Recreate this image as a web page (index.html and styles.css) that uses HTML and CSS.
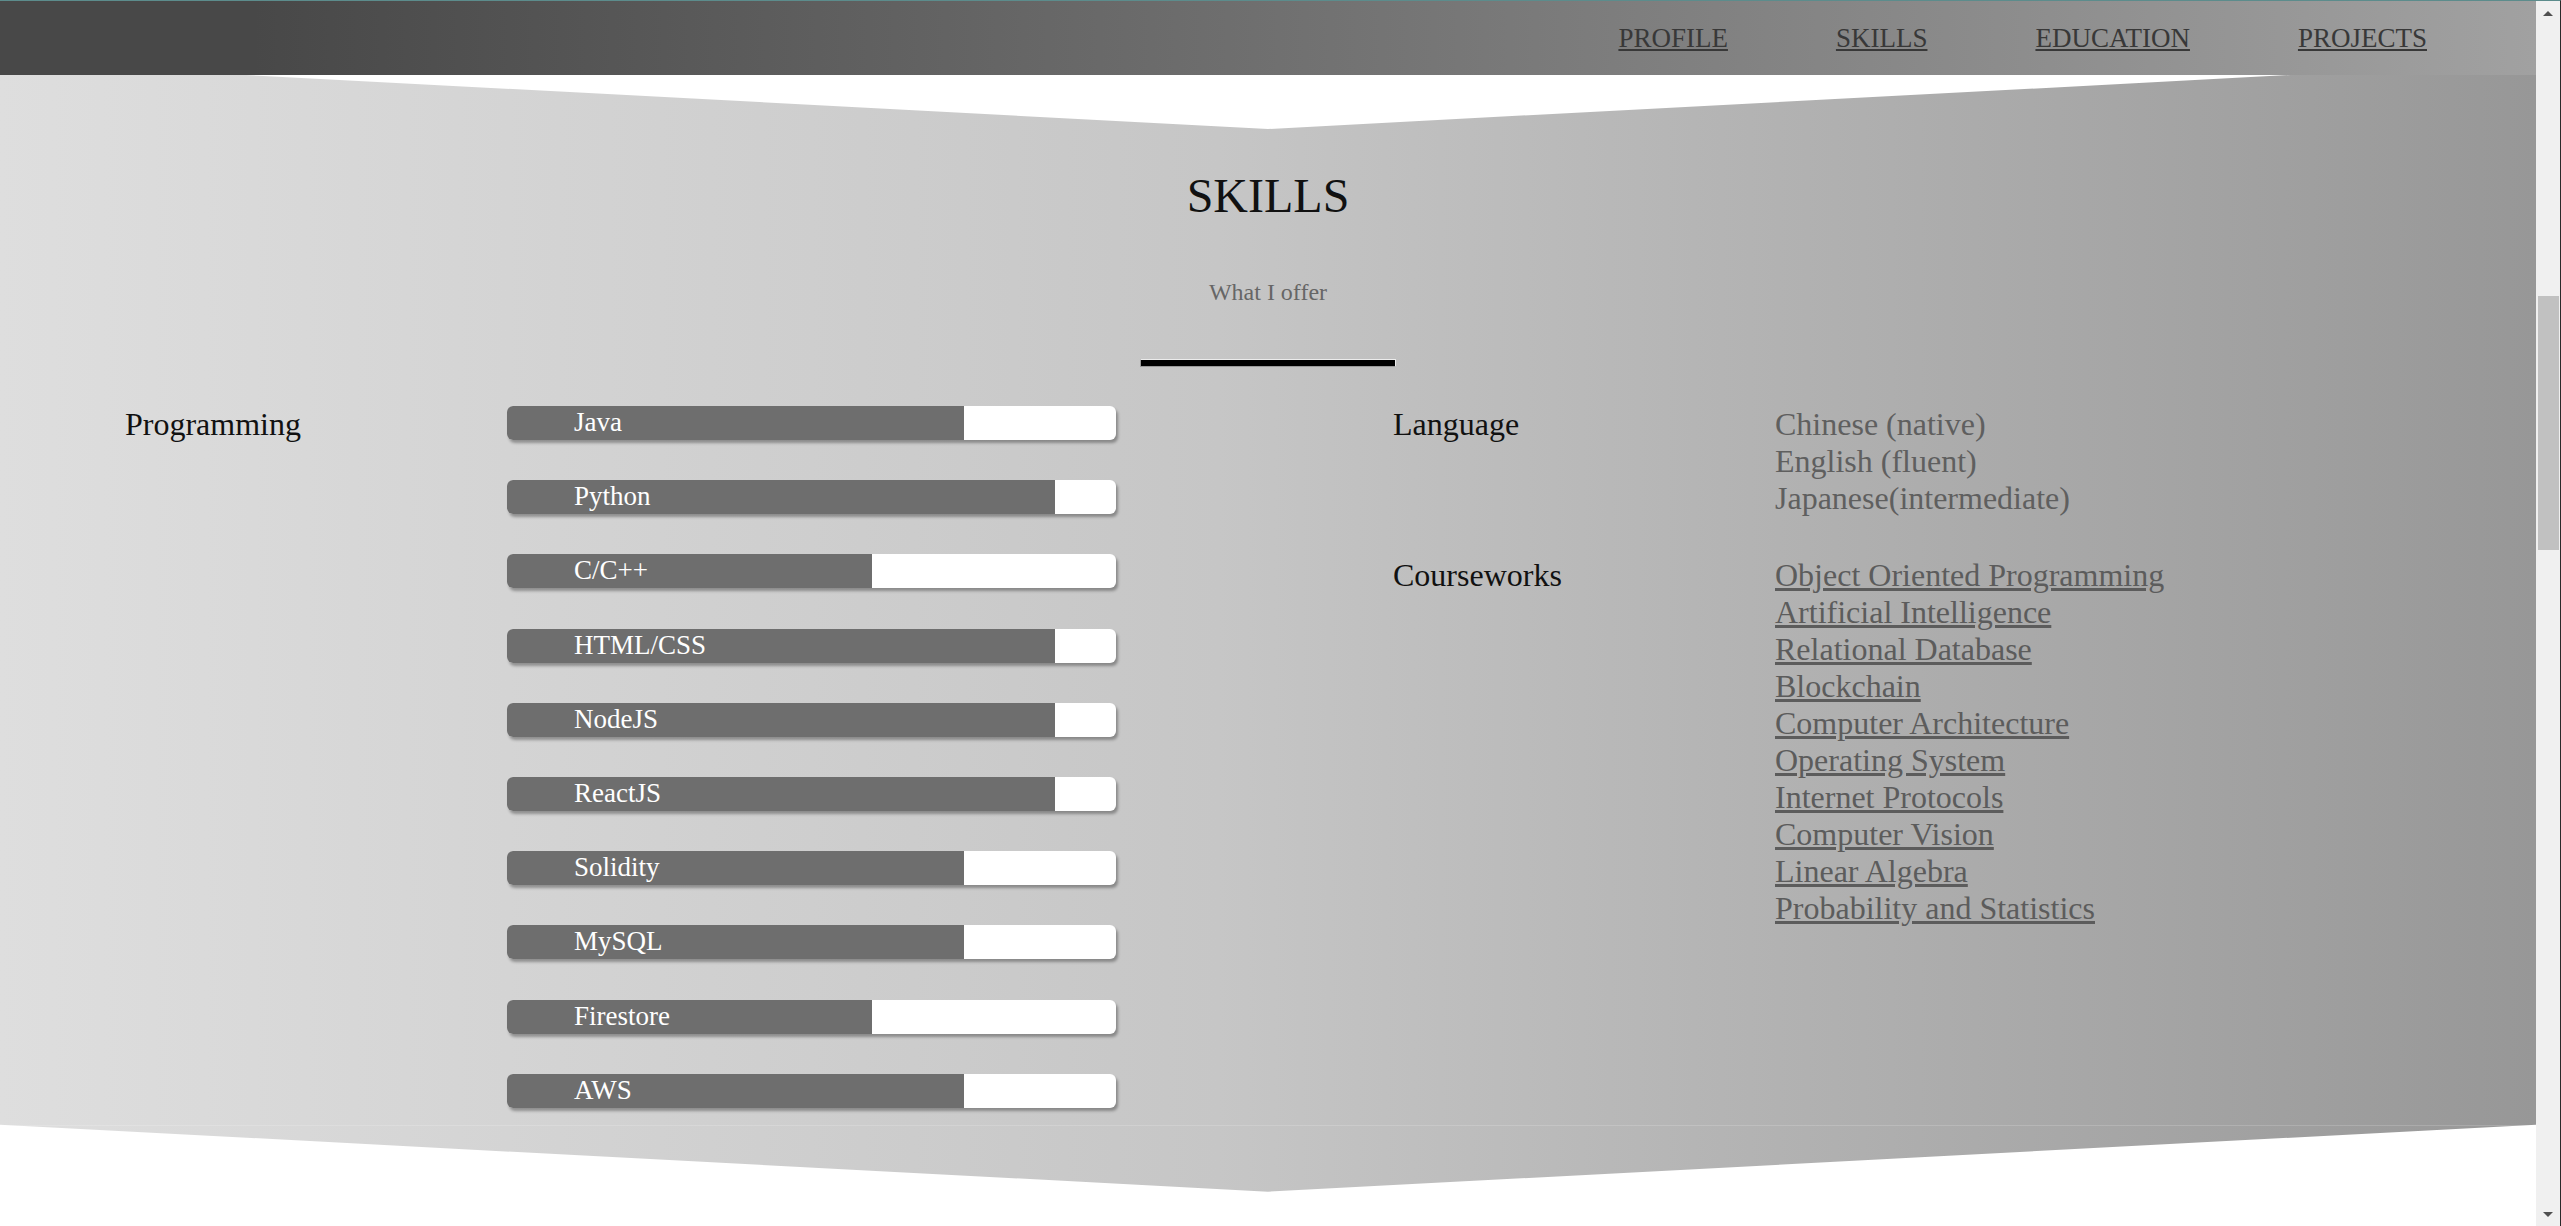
FILE: index.html
```html
<!DOCTYPE html>
<html lang="en">
<head>
<meta charset="utf-8">
<title>Skills</title>
<link rel="stylesheet" href="styles.css">
</head>
<body>
<div class="window">
  <div class="viewport">
    <nav class="topnav">
      <a href="#">PROFILE</a>
      <a href="#">SKILLS</a>
      <a href="#">EDUCATION</a>
      <a href="#">PROJECTS</a>
    </nav>
    <section class="skills">
      <h2 class="title">SKILLS</h2>
      <p class="subtitle">What I offer</p>
      <div class="divider"></div>
      <div class="columns">
        <div class="half">
          <div class="group">
            <div class="label">Programming</div>
            <div class="bars">
              <div class="bar"><div class="fill" style="width:75%"><span>Java</span></div></div>
              <div class="bar"><div class="fill" style="width:90%"><span>Python</span></div></div>
              <div class="bar"><div class="fill" style="width:60%"><span>C/C++</span></div></div>
              <div class="bar"><div class="fill" style="width:90%"><span>HTML/CSS</span></div></div>
              <div class="bar"><div class="fill" style="width:90%"><span>NodeJS</span></div></div>
              <div class="bar"><div class="fill" style="width:90%"><span>ReactJS</span></div></div>
              <div class="bar"><div class="fill" style="width:75%"><span>Solidity</span></div></div>
              <div class="bar"><div class="fill" style="width:75%"><span>MySQL</span></div></div>
              <div class="bar"><div class="fill" style="width:60%"><span>Firestore</span></div></div>
              <div class="bar"><div class="fill" style="width:75%"><span>AWS</span></div></div>
            </div>
          </div>
        </div>
        <div class="half">
          <div class="group">
            <div class="label">Language</div>
            <ul class="values">
              <li>Chinese (native)</li>
              <li>English (fluent)</li>
              <li>Japanese(intermediate)</li>
            </ul>
          </div>
          <div class="group group-next">
            <div class="label">Courseworks</div>
            <ul class="values">
              <li><a href="#">Object Oriented Programming</a></li>
              <li><a href="#">Artificial Intelligence</a></li>
              <li><a href="#">Relational Database</a></li>
              <li><a href="#">Blockchain</a></li>
              <li><a href="#">Computer Architecture</a></li>
              <li><a href="#">Operating System</a></li>
              <li><a href="#">Internet Protocols</a></li>
              <li><a href="#">Computer Vision</a></li>
              <li><a href="#">Linear Algebra</a></li>
              <li><a href="#">Probability and Statistics</a></li>
            </ul>
          </div>
        </div>
      </div>
    </section>
  </div>
  <div class="scrollbar">
    <div class="arrow arrow-up"></div>
    <div class="track"><div class="thumb"></div></div>
    <div class="arrow arrow-down"></div>
  </div>
</div>
</body>
</html>
```

FILE: styles.css
```css
* { box-sizing: border-box; }

html, body {
  margin: 0;
  padding: 0;
  height: 100%;
  background: #ffffff;
  overflow: hidden;
}

body {
  font-family: "Liberation Serif", "Times New Roman", serif;
  color: #111;
}

.window {
  display: flex;
  height: 1226px;
  border-top: 1px solid #5c8c8c;
  border-right: 1px solid #2a2a2a;
}

.viewport {
  flex: 1;
  position: relative;
  overflow: hidden;
  background: #fff;
}

/* fixed top navigation bar (overlays the page) */
.topnav {
  position: absolute;
  top: 0;
  left: 0;
  right: 0;
  height: 74px;
  z-index: 5;
  display: flex;
  justify-content: flex-end;
  align-items: flex-start;
  gap: 108px;
  padding: 22px 109px 0 0;
  background: linear-gradient(to right, #484848 10%, #a1a1a1 100%);
}

.topnav a {
  font-size: 27px;
  line-height: 31px;
  color: #383838;
  text-decoration: underline;
}

/* skills section */
.skills {
  margin-top: 61px;
  padding: 106px 0 84px;
  background:
    linear-gradient(to bottom, transparent 1063px, rgba(255,255,255,0.16) 1063px, rgba(255,255,255,0.16) 1064px, transparent 1064px),
    linear-gradient(to right, #dedede 0%, #c6c6c6 48%, #979797 100%);
  clip-path: polygon(0 0, 50% 67px, 100% 0, 100% calc(100% - 67px), 50% 100%, 0 calc(100% - 67px));
}

.title {
  margin: 0;
  font-size: 48px;
  line-height: 55px;
  font-weight: normal;
  text-align: center;
  color: #111;
}

.subtitle {
  margin: 56px 0 0;
  font-size: 24px;
  line-height: 27px;
  text-align: center;
  color: #666;
}

.divider {
  width: 256px;
  height: 8px;
  margin: 53px auto 0;
  background: #000;
  border: 1px solid;
  border-color: #ececec #ececec #9a9a9a #9a9a9a;
}

.columns {
  margin-top: 39px;
  display: grid;
  grid-template-columns: 1fr 1fr;
}

.half {
  padding-left: 125px;
}

.group {
  display: grid;
  grid-template-columns: 382px 1fr;
  align-items: start;
}

.group-next {
  margin-top: 40px;
}

.label {
  font-size: 32px;
  line-height: 37px;
  color: #111;
}

.bars {
  display: flex;
  flex-direction: column;
  gap: 40.2px;
}

.bar {
  width: 609px;
  height: 34px;
  background: #ffffff;
  border-radius: 6px;
  overflow: hidden;
  box-shadow: 2px 3px 3px rgba(0, 0, 0, 0.32);
}

.fill {
  height: 100%;
  background: #6e6e6e;
  padding-left: 67px;
  padding-top: 1px;
  white-space: nowrap;
}

.fill span {
  display: block;
  font-size: 27px;
  line-height: 31px;
  color: #ffffff;
}

.values {
  list-style: none;
  margin: 0;
  padding: 0;
  font-size: 32px;
  line-height: 37px;
  color: #5f5f5f;
}

.values a {
  color: #5c5c5c;
  text-decoration: underline;
}

/* scrollbar */
.scrollbar {
  width: 24px;
  flex: none;
  display: flex;
  flex-direction: column;
  background: #f0f0f0;
}

.arrow {
  height: 24px;
  flex: none;
  display: flex;
  justify-content: center;
  align-items: center;
}

.arrow-up::before {
  content: "";
  width: 0;
  height: 0;
  border-left: 5px solid transparent;
  border-right: 5px solid transparent;
  border-bottom: 5px solid #505050;
}

.arrow-down::before {
  content: "";
  width: 0;
  height: 0;
  border-left: 5px solid transparent;
  border-right: 5px solid transparent;
  border-top: 5px solid #505050;
}

.track {
  flex: 1;
  padding: 0 1px 0 2px;
}

.thumb {
  margin-top: 271px;
  height: 254px;
  background: #c1c1c1;
}
```
